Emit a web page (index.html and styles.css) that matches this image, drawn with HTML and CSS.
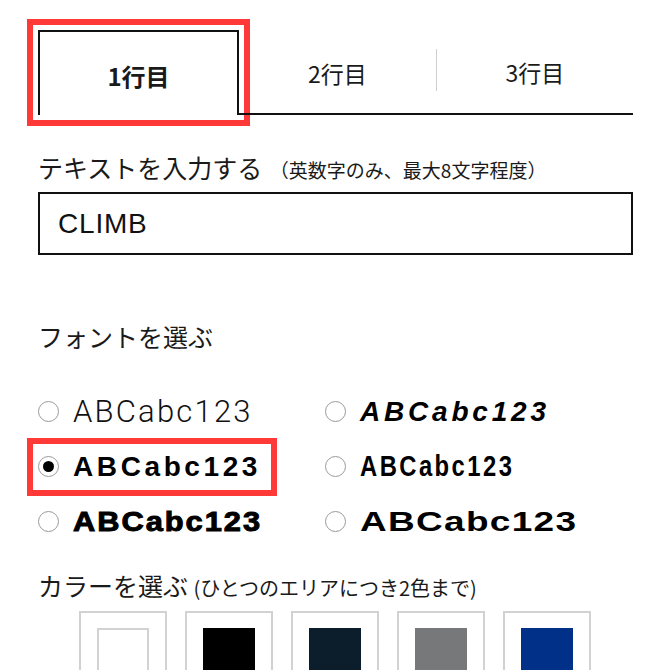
FILE: index.html
```html
<!DOCTYPE html>
<html lang="ja">
<head>
<meta charset="utf-8">
<title>デザイン入力</title>
<link rel="stylesheet" href="styles.css">
</head>
<body>
<div class="page">
  <div class="tabs">
    <div class="tab tab-active"><span class="tab-label">1行目</span></div>
    <div class="tab"><span class="tab-label">2行目</span></div>
    <div class="tab"><span class="tab-label tab-divided">3行目</span></div>
  </div>

  <div class="field-label">テキストを入力する <small class="note">（英数字のみ、最大8文字程度）</small></div>
  <div class="text-input">CLIMB</div>

  <div class="section-label">フォントを選ぶ</div>
  <div class="font-grid">
    <label class="font-opt"><span class="radio"></span><span class="sample f-light">ABCabc123</span></label>
    <label class="font-opt"><span class="radio"></span><span class="sample f-italic">ABCabc123</span></label>
    <label class="font-opt selected"><span class="radio checked"></span><span class="sample f-bold">ABCabc123</span></label>
    <label class="font-opt"><span class="radio"></span><span class="sample f-cond">ABCabc123</span></label>
    <label class="font-opt"><span class="radio"></span><span class="sample f-black">ABCabc123</span></label>
    <label class="font-opt"><span class="radio"></span><span class="sample f-ext">ABCabc123</span></label>
  </div>

  <div class="color-label">カラーを選ぶ <small class="note2">(ひとつのエリアにつき2色まで)</small></div>
  <div class="swatches">
    <div class="swatch"><div class="chip chip-white"></div></div>
    <div class="swatch"><div class="chip chip-black"></div></div>
    <div class="swatch"><div class="chip chip-navy"></div></div>
    <div class="swatch"><div class="chip chip-gray"></div></div>
    <div class="swatch"><div class="chip chip-blue"></div></div>
  </div>
</div>
</body>
</html>
```
FILE: styles.css
```css
html, body {
  margin: 0;
  padding: 0;
  background: #fff;
  overflow: hidden;
}
body {
  font-family: "Noto Sans CJK JP", "Liberation Sans", sans-serif;
  color: #1a1a1a;
}
.page {
  width: 595px;
  height: 640px;
  overflow: hidden;
  padding: 30px 37px 0 38px;
}

/* tabs */
.tabs {
  display: grid;
  grid-template-columns: 201px 1fr 1fr;
  height: 85px;
}
.tab {
  display: flex;
  align-items: center;
  justify-content: center;
  border-bottom: 2px solid #111;
  font-size: 23px;
}
.tab-active {
  border: 2px solid #111;
  border-bottom: none;
  font-weight: bold;
  font-size: 24px;
  outline: 6px solid #ff3838;
  outline-offset: 5px;
}
.tab-label {
  line-height: 1;
  padding-top: 4px;
}
.tab-divided {
  align-self: center;
  width: 100%;
  height: 42px;
  margin-top: -4px;
  border-left: 1px solid #cfcfcf;
  display: flex;
  align-items: center;
  justify-content: center;
  padding-top: 6px;
  box-sizing: border-box;
}

/* text field */
.field-label {
  margin-top: 37px;
  font-size: 25px;
  line-height: 30px;
  height: 30px;
  white-space: nowrap;
}
.note {
  font-size: 19px;
  margin-left: 2px;
}
.text-input {
  margin-top: 10px;
  height: 59px;
  border: 2px solid #111;
  display: flex;
  align-items: center;
  padding-left: 18px;
  font-family: "Liberation Sans", Arial, sans-serif;
  font-size: 28px;
  letter-spacing: 0.8px;
  color: #111;
}

/* fonts */
.section-label {
  margin-top: 66px;
  font-size: 25px;
  line-height: 30px;
}
.font-grid {
  margin-top: 33px;
  display: grid;
  grid-template-columns: 287px 1fr;
  grid-auto-rows: 55px;
}
.font-opt {
  display: flex;
  align-items: center;
  justify-self: start;
  align-self: center;
  height: 36px;
}
.font-opt.selected {
  outline: 6px solid #ff3838;
  outline-offset: 5px;
  padding-right: 5px;
}
.radio {
  width: 21px;
  height: 21px;
  border: 1.5px solid #9a9a9a;
  border-radius: 50%;
  box-sizing: border-box;
  margin-right: 14px;
  display: flex;
  align-items: center;
  justify-content: center;
  flex-shrink: 0;
}
.radio.checked::after {
  content: "";
  width: 11px;
  height: 11px;
  border-radius: 50%;
  background: #000;
}
.sample {
  font-family: "Liberation Sans", Arial, sans-serif;
  font-size: 28px;
  line-height: 1;
  color: #000;
  white-space: nowrap;
  display: inline-block;
}
.f-light {
  font-family: Roboto, "Liberation Sans", sans-serif;
  font-weight: 300;
  font-size: 31px;
  letter-spacing: 2.2px;
  color: #111;
}
.f-italic {
  font-weight: bold;
  font-style: italic;
  letter-spacing: 3.8px;
}
.f-bold {
  font-weight: bold;
  letter-spacing: 3.6px;
}
.f-cond {
  font-weight: bold;
  font-size: 29px;
  letter-spacing: 3px;
  transform: scaleX(0.82);
  transform-origin: left center;
}
.f-black {
  font-weight: bold;
  -webkit-text-stroke: 1px #000;
  letter-spacing: 1.8px;
  transform: scaleX(1.1);
  transform-origin: left center;
}
.f-ext {
  font-weight: bold;
  letter-spacing: 1px;
  transform: scaleX(1.32);
  transform-origin: left center;
}

/* colors */
.color-label {
  margin-top: 21px;
  font-size: 25px;
  line-height: 30px;
  white-space: nowrap;
}
.note2 {
  font-size: 20px;
}
.swatches {
  margin-top: 8px;
  margin-left: 41px;
  display: flex;
  gap: 18px;
}
.swatch {
  width: 88px;
  height: 100px;
  box-sizing: border-box;
  border: 2px solid #d2d2d2;
  padding: 15px 16px 0;
}
.chip {
  height: 80px;
}
.chip-white { background: #fff; border: 2px solid #d2d2d2; box-sizing: border-box; }
.chip-black { background: #000; }
.chip-navy { background: #0c1e2c; }
.chip-gray { background: #76787a; }
.chip-blue { background: #003087; }
```
